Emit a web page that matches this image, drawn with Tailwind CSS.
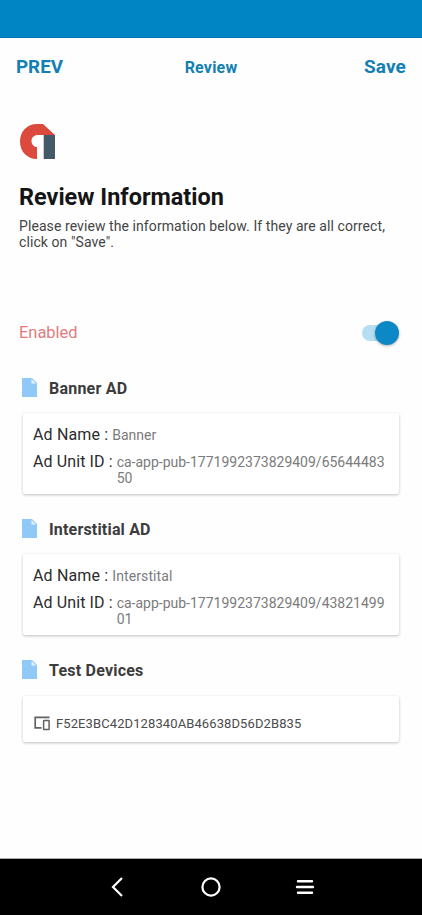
<!DOCTYPE html>
<html lang="en">
<head>
<meta charset="utf-8">
<title>Review</title>
<script src="https://cdn.jsdelivr.net/npm/@tailwindcss/browser@4"></script>
</head>
<body class="bg-white font-[Roboto,sans-serif]">
<div class="flex h-[915px] w-[422px] flex-col overflow-hidden bg-[#fefefe]">
  <div class="h-[38px] shrink-0 border-b border-[#0074ad] bg-[#0085c4]"></div>
  <header class="grid h-[58px] shrink-0 grid-cols-3 items-center px-4 font-bold text-[#1380b4]">
    <span class="text-[18.800px]">PREV</span>
    <span class="pt-px text-center text-[16px] tracking-[0.2px]">Review</span>
    <span class="text-right text-[19px] tracking-[0.150px]">Save</span>
  </header>
  <main class="flex-1 pl-[19px] pr-[23px] pt-[28px]">
    <svg class="block h-[35px] w-[36px]" viewBox="0 0 36 35">
      <path fill="#dc4a3e" d="M18 0H24L36 11H19C15 11 12.500 13.500 12.500 17C12.500 20.500 15 23 18 23V35C8 35 1 27.500 1 17.500C1 7.500 8 0 18 0Z"/>
      <path fill="#455a68" d="M24.700 11H36V35H24.700Z"/>
    </svg>
    <h1 class="mt-[23px] text-[23.450px] font-bold leading-[30px] text-[#151515]">Review Information</h1>
    <p class="mt-[6px] whitespace-nowrap text-[14px] leading-4 tracking-[0.080px] text-[#454545]">Please review the information below. If they are all correct,<br>click on "Save".</p>
    <div class="mt-[71px] flex h-6 items-center justify-between">
      <span class="pt-px text-[16.500px] tracking-[-0.050px] text-[#e27c7e]">Enabled</span>
      <span class="flex h-4 w-[37px] items-center justify-end rounded-full bg-[#b6def1]"><span class="size-6 shrink-0 rounded-full bg-[#0d88c6] shadow-[0_1px_3px_rgba(0,0,0,0.3)]"></span></span>
    </div>

    <section class="mt-[31px] h-[141px] pl-1">
      <div class="flex h-6 items-center">
        <svg class="-ml-px -mt-px h-[19px] w-[15px]" viewBox="0 0 15 19"><path fill="#90c9f8" d="M0 0H10L15 5V19H0Z"/><path fill="#e3f3fe" d="M9.500 1L14 5.500H9.500Z"/></svg>
        <h2 class="ml-[12px] pt-[2px] text-[16px] font-bold tracking-[0.220px] text-[#3c3c3c]">Banner AD</h2>
      </div>
      <div class="mt-[13px] h-[81px] rounded-[2px] bg-white px-[10px] pt-3 shadow-[0_1px_3px_rgba(0,0,0,0.25)]">
        <div class="flex items-baseline whitespace-nowrap leading-5"><span class="text-[16px] tracking-[0.150px] text-[#2c2c2c]">Ad Name :</span><span class="ml-1 text-[14px] text-[#7b7b7b]">Banner</span></div>
        <div class="mt-[7px] flex items-baseline whitespace-nowrap"><span class="text-[16px] leading-5 tracking-[0.100px] text-[#2c2c2c]">Ad Unit ID :</span><span class="ml-1 text-[14px] leading-4 text-[#7b7b7b]">ca-app-pub-1771992373829409/65644483<br>50</span></div>
      </div>
    </section>

    <section class="h-[141px] pl-1">
      <div class="flex h-6 items-center">
        <svg class="-ml-px -mt-px h-[19px] w-[15px]" viewBox="0 0 15 19"><path fill="#90c9f8" d="M0 0H10L15 5V19H0Z"/><path fill="#e3f3fe" d="M9.500 1L14 5.500H9.500Z"/></svg>
        <h2 class="ml-[12px] pt-[2px] text-[16px] font-bold tracking-[0.180px] text-[#3c3c3c]">Interstitial AD</h2>
      </div>
      <div class="mt-[13px] h-[81px] rounded-[2px] bg-white px-[10px] pt-3 shadow-[0_1px_3px_rgba(0,0,0,0.25)]">
        <div class="flex items-baseline whitespace-nowrap leading-5"><span class="text-[16px] tracking-[0.150px] text-[#2c2c2c]">Ad Name :</span><span class="ml-1 text-[14px] tracking-[0.100px] text-[#7b7b7b]">Interstital</span></div>
        <div class="mt-[7px] flex items-baseline whitespace-nowrap"><span class="text-[16px] leading-5 tracking-[0.100px] text-[#2c2c2c]">Ad Unit ID :</span><span class="ml-1 text-[14px] leading-4 text-[#7b7b7b]">ca-app-pub-1771992373829409/43821499<br>01</span></div>
      </div>
    </section>

    <section class="pl-1">
      <div class="flex h-6 items-center">
        <svg class="-ml-px -mt-px h-[19px] w-[15px]" viewBox="0 0 15 19"><path fill="#90c9f8" d="M0 0H10L15 5V19H0Z"/><path fill="#e3f3fe" d="M9.500 1L14 5.500H9.500Z"/></svg>
        <h2 class="ml-[12px] pt-[2px] text-[16px] font-bold tracking-[0.220px] text-[#3c3c3c]">Test Devices</h2>
      </div>
      <div class="mt-[14px] flex h-[46px] items-center rounded-[2px] bg-white pl-[11px] pt-2 shadow-[0_1px_3px_rgba(0,0,0,0.25)]">
        <svg class="h-[15px] w-4" viewBox="0 0 16 15" fill="none" stroke="#626262" stroke-width="1.700"><path d="M15.500 1.300H1.200V11.800H7.500"/><rect x="9.600" y="4.400" width="5.500" height="9.200" rx=".5" stroke-width="1.500"/></svg>
        <span class="ml-[6px] pt-[2px] text-[13px] tracking-[0.100px] text-[#4c4c4c]">F52E3BC42D128340AB46638D56D2B835</span>
      </div>
    </section>
  </main>
  <nav class="flex h-[57px] shrink-0 items-center justify-center gap-[74px] border-t border-[#aaa] bg-black">
    <svg class="size-5" viewBox="0 0 20 20" fill="none" stroke="#fff" stroke-width="2.200"><path d="M15 1L6 10L15 19"/></svg>
    <svg class="size-5" viewBox="0 0 20 20" fill="none" stroke="#fff" stroke-width="2.200"><circle cx="10" cy="10" r="8.600"/></svg>
    <svg class="size-5" viewBox="0 0 20 20" fill="none" stroke="#fff" stroke-width="2.400" stroke-linecap="round"><path d="M3 4.200H17M2 10H18M3 15.800H17"/></svg>
  </nav>
</div>
</body>
</html>
